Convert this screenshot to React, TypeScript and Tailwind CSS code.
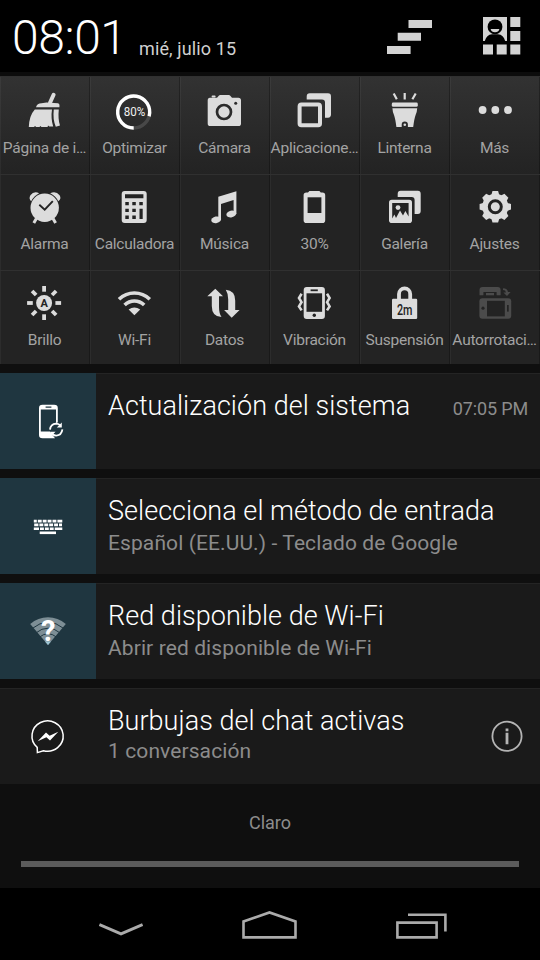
import React from 'react';

interface Tile {
  label: string;
  icon: React.ReactNode;
}

interface NotificationItem {
  title: string;
  text?: string;
  time?: string;
  icon: React.ReactNode;
  highlighted?: boolean;
  info?: boolean;
  /** Vertical gap between title and text */
  textClass?: string;
}

const LIGHT = '#dcdcdc';
const DARK = '#232323';

const TileIcon: React.FC<{ children: React.ReactNode }> = ({ children }) => (
  <svg width="36" height="36" viewBox="0 0 36 36" fill={LIGHT} className="block shrink-0 overflow-visible">
    {children}
  </svg>
);

const BroomIcon = () => (
  <TileIcon>
    <path d="M26.6 1.8 23 9.8" stroke={LIGHT} strokeWidth="4" strokeLinecap="round" />
    <path d="M9 14.2Q10 10.4 14.5 10.2L19.5 9.4 31 10.2Q32.6 10.4 32.5 12.4L32.4 14.2Z" />
    <path d="M7.8 16.4H25Q23.6 25 26.2 33.6L22.4 33.6 21 32.5 20.6 34H14.5L13.4 33 12.5 34H9.2L8 33 7 34H1.8Q2.2 22.5 7.8 16.4Z" />
    <path d="M26.8 16.4H31.8Q30.8 26 33 32.6L28.8 33.8Q25.6 26 26.8 16.4Z" />
  </TileIcon>
);

const OptimizeIcon = () => (
  <TileIcon>
    <circle cx="16.7" cy="19" r="16" fill="none" stroke="#484848" strokeWidth="3.4" />
    <path d="M16.7 35A16 16 0 1 1 32.1 23.2" fill="none" stroke="#fff" strokeWidth="3.4" />
    <text x="17.6" y="23.2" textAnchor="middle" textLength="21.5" lengthAdjust="spacingAndGlyphs" fill="#f0f0f0" className="font-[Roboto] text-[12px]">80%</text>
  </TileIcon>
);

const CameraIcon = () => (
  <TileIcon>
    <path d="M3 4.7H10L12 2.4Q12.4 2 13 2H22Q22.6 2 23 2.4L25 4.7H31.4Q34 4.7 34 7.4V30.4Q34 33 31.4 33H3.4Q.7 33 .7 30.4V7.4Q.7 4.7 3 4.7Z" />
    <rect x="4.6" y="2.6" width="4" height="2" rx=".8" />
    <circle cx="17" cy="19" r="7" fill="none" stroke="#2b2b2b" strokeWidth="2.7" />
    <circle cx="28.7" cy="10.3" r="1.5" fill="#2b2b2b" />
  </TileIcon>
);

const AppsIcon = () => (
  <TileIcon>
    <rect x="2.6" y="11.6" width="20.4" height="20.6" rx="1.8" fill="none" stroke={LIGHT} strokeWidth="4" />
    <path d="M9.7 6.6V3.4Q9.7.3 12.8.3H31Q34 .3 34 3.4V21.6Q34 24.7 31 24.7H28V9.6Q28 6.6 25 6.6Z" />
  </TileIcon>
);

const TorchIcon = () => (
  <TileIcon>
    <path d="M6.7.5 9.8 6.2M17.7 0V6.5M28.7.5 25.4 6.2" stroke={LIGHT} strokeWidth="2.2" />
    <rect x="4.8" y="9.6" width="26" height="4.2" rx="1.4" />
    <path d="M5.4 15.2H30.2Q30 19 28.6 22 27.4 25 26.2 34H20.9V31.6A3.1 3.1 0 0 0 14.7 31.6V34H9.4Q8.2 25 7 22 5.6 19 5.4 15.2Z" />
    <circle cx="17.8" cy="31.8" r="1.3" />
  </TileIcon>
);

const MoreIcon = () => (
  <TileIcon>
    <circle cx="5.6" cy="17" r="3.9" />
    <circle cx="18.3" cy="17" r="3.9" />
    <circle cx="31" cy="17" r="3.9" />
  </TileIcon>
);

const AlarmIcon = () => (
  <TileIcon>
    <circle cx="17.7" cy="18.7" r="14.2" />
    <path d="M4.2 12.2Q1.4 9.8 3.4 6.2 6.8 1.8 12.2 4.2 7 6.6 4.2 12.2ZM31.2 12.2Q34.8 9.8 32.6 6.2 29 1.8 23.2 4.2 28.6 6.6 31.2 12.2Z" />
    <path d="M9.4 29.5 6.8 34M26 29.5 28.6 34" stroke={LIGHT} strokeWidth="3" />
    <path d="M12.3 15.8 17.7 20.6 25.8 12.2" fill="none" stroke={DARK} strokeWidth="1.9" />
  </TileIcon>
);

const CalculatorIcon = () => (
  <TileIcon>
    <rect x="4.7" y="2" width="25" height="32" rx="3" />
    <path
      fill={DARK}
      d="M8 5.2h18.4v4H8zM8.3 13h3.5v3.3H8.3zM15.3 13h3.5v3.3h-3.5zM22.3 13h3.5v3.3h-3.5zM8.3 19.8h3.5v3.3H8.3zM15.3 19.8h3.5v3.3h-3.5zM8.3 26.6h3.5v3.3H8.3zM15.3 26.6h3.5v3.3h-3.5zM22.5 19.8h3.2v10.1h-3.2z"
    />
  </TileIcon>
);

const MusicIcon = () => (
  <TileIcon>
    <path d="M11.3 7.8 29.4 2.2V25H26.6V11L14 15V30.6H11.3Z" />
    <ellipse cx="9.2" cy="30.8" rx="5" ry="3.3" transform="rotate(-12 9.2 30.8)" />
    <ellipse cx="24.3" cy="25" rx="5" ry="3.3" transform="rotate(-12 24.3 25)" />
  </TileIcon>
);

const BatteryIcon = () => (
  <TileIcon>
    <path d="M9.4 3.4H11L12.4 2H22.4L23.8 3.4H25.4Q28.2 3.4 28.2 6.2V31.2Q28.2 34 25.4 34H9.4Q6.6 34 6.6 31.2V6.2Q6.6 3.4 9.4 3.4Z" />
    <rect x="10.6" y="8.3" width="13.8" height="15.7" fill={DARK} />
  </TileIcon>
);

const GalleryIcon = () => (
  <TileIcon>
    <path d="M10.7 8V4.7Q10.7 1.8 13.6 1.8H30.8Q33.7 1.8 33.7 4.7V22Q33.7 25 30.8 25H27.6V11Q27.6 8 24.7 8Z" />
    <rect x="2" y="10.7" width="23" height="23.3" rx="2.8" />
    <path d="M5.2 14H21.6V27.6L18.4 22 16 26.4 13 21.5 9 29 7.4 25.6 5.2 29.6Z" fill={DARK} />
    <circle cx="11" cy="18.6" r="2.4" />
  </TileIcon>
);

const ANGLES = [0, 45, 90, 135, 180, 225, 270, 315];

const SettingsIcon = () => (
  <TileIcon>
    {ANGLES.map(angle => (
      <path key={angle} d="M14.2 6.4 15.5 2.1H21.1L22.4 6.4Z" transform={`rotate(${angle} 18.3 17.8)`} />
    ))}
    <circle cx="18.3" cy="17.8" r="13" />
    <circle cx="18.3" cy="17.8" r="6" fill="none" stroke={DARK} strokeWidth="3" />
  </TileIcon>
);

const BrightnessIcon = () => (
  <TileIcon>
    {ANGLES.map(angle => (
      <rect key={angle} x="15.2" y="1" width="3.8" height="5.7" transform={`rotate(${angle} 17.1 18)`} />
    ))}
    <circle cx="17.1" cy="18" r="8" />
    <text x="17.1" y="22" textAnchor="middle" fill={DARK} className="font-[Roboto] text-[11px] font-bold">A</text>
  </TileIcon>
);

const WifiIcon = () => (
  <TileIcon>
    <g fill="none" stroke={LIGHT} strokeWidth="3.6">
      <path d="M2 14.2Q8.6 8 17.4 8T32.8 14.2" />
      <path d="M7.6 20Q11.8 16 17.4 16T27.2 20" />
    </g>
    <path d="M11.6 24.6Q17.4 20.6 23.2 24.6L17.4 30.2Z" />
  </TileIcon>
);

const DataIcon = () => (
  <TileIcon>
    <path d="M8.3 3.7 16 11.3H12V22Q12 28.5 14.5 32 4.8 31.8 4.8 21V11.3H.3Z" />
    <path d="M24.7 32.8 17.1 25H21.2V14.6Q21.2 8.4 18.8 4.7 28.2 5.4 28.2 15.6V25H32.6Z" />
  </TileIcon>
);

const VibrateIcon = () => (
  <TileIcon>
    <rect x="6.7" y="2" width="21.2" height="32" rx="3" />
    <rect x="9.5" y="8.3" width="15.6" height="18.5" fill={DARK} />
    <rect x="13.6" y="4.4" width="7.2" height="1.8" fill={DARK} />
    <circle cx="17.3" cy="30.3" r="1.7" fill={DARK} />
    <path
      d="M4.6 8.8 2 13 4.5 17.2 2 21.4 4.6 25.4M30 8.8 32.6 13 30.1 17.2 32.6 21.4 30 25.4"
      fill="none"
      stroke={LIGHT}
      strokeWidth="2.6"
    />
  </TileIcon>
);

const LockIcon = () => (
  <TileIcon>
    <rect x="5" y="13.8" width="25.2" height="20.2" rx="1.2" />
    <path d="M12 14.5V9A5.6 5.6 0 0 1 23.2 9V14.5" fill="none" stroke={LIGHT} strokeWidth="3.8" />
    <text x="17.7" y="29.6" textAnchor="middle" textLength="15.5" lengthAdjust="spacingAndGlyphs" fill={DARK} className="font-[Roboto] text-[14.5px] font-medium">2m</text>
  </TileIcon>
);

const RotateIcon = () => (
  <TileIcon>
    <g fill="#4b4b4b">
      <path d="M2.5 10.3V5Q2.5 2 5.5 2H20.6Q23.6 2 23.6 5V10.3H19.6V7H6.4V10.3Z" />
      <rect x="9" y="8" width="8" height="2.3" />
      <rect x="2.4" y="13.3" width="31.8" height="20.4" rx="3" />
      <path d="M26 3.2Q30.5 3.2 31 7H33.6L30 11 26.4 7.4H29Q28.6 5 26 5Z" />
    </g>
    <rect x="10" y="15.8" width="17.8" height="15.6" fill={DARK} />
    <circle cx="6" cy="23.2" r="1.6" fill={DARK} />
    <rect x="30" y="20" width="1.7" height="6.6" fill={DARK} />
  </TileIcon>
);

const ROWS: Tile[][] = [
  [
    { label: 'Página de i…', icon: <BroomIcon /> },
    { label: 'Optimizar', icon: <OptimizeIcon /> },
    { label: 'Cámara', icon: <CameraIcon /> },
    { label: 'Aplicacione…', icon: <AppsIcon /> },
    { label: 'Linterna', icon: <TorchIcon /> },
    { label: 'Más', icon: <MoreIcon /> }
  ],
  [
    { label: 'Alarma', icon: <AlarmIcon /> },
    { label: 'Calculadora', icon: <CalculatorIcon /> },
    { label: 'Música', icon: <MusicIcon /> },
    { label: '30%', icon: <BatteryIcon /> },
    { label: 'Galería', icon: <GalleryIcon /> },
    { label: 'Ajustes', icon: <SettingsIcon /> }
  ],
  [
    { label: 'Brillo', icon: <BrightnessIcon /> },
    { label: 'Wi-Fi', icon: <WifiIcon /> },
    { label: 'Datos', icon: <DataIcon /> },
    { label: 'Vibración', icon: <VibrateIcon /> },
    { label: 'Suspensión', icon: <LockIcon /> },
    { label: 'Autorrotaci…', icon: <RotateIcon /> }
  ]
];

const ROW_CLASSES = [
  'h-[98px] bg-linear-to-b from-[#323232] to-[#232323]',
  'h-[96px] bg-[#232323]',
  'h-[94px] bg-[#232323]'
];

const TILE_CLASSES = ['pt-[16px]', 'pt-[14px]', 'pt-[14px]'];

const NoteIcon: React.FC<{ children: React.ReactNode }> = ({ children }) => (
  <svg width="96" height="96" viewBox="0 0 96 96" fill="#fff" className="block">
    {children}
  </svg>
);

const UpdateIcon = () => (
  <NoteIcon>
    <path
      fillRule="evenodd"
      d="M42.5 31.7H54.2Q57.8 31.7 57.8 35V49.5L56 50V36.5H40.8V58.6H50L52.5 62 55 65.3H42.5Q39 65.3 39 62V35Q39 31.7 42.5 31.7ZM45.6 33.4V34.8H51.4V33.4Z"
    />
    <path d="M50 56.6Q50.6 51 56 50.6 58.4 50.6 60 52.2M62.4 56.4Q61.6 62.2 56.4 62.6 54 62.6 52.4 61" fill="none" stroke="#fff" strokeWidth="1.8" />
    <path d="M61.8 49.4V54.4H56.8ZM50.4 63.8V58.8H55.6Z" />
  </NoteIcon>
);

const KeyboardIcon = () => (
  <NoteIcon>
    <g fill="none" stroke="#fff" strokeWidth="2.6">
      <path d="M33.8 43.1H62.3" strokeDasharray="3 1 3.9 1 3.9 1 3.9 1 3.9 1 5 0" />
      <path d="M34.2 46.9H62" strokeDasharray="4.2 1 3.9 1 3.9 1 3.9 1 3.9 1 5 0" />
      <path d="M33.8 50.8H62.3" strokeDasharray="5.2 1 3.9 1 3.9 1 3.9 1 7 0" />
      <path d="M39.7 54.8H56" />
    </g>
  </NoteIcon>
);

const OpenWifiIcon = () => (
  <NoteIcon>
    <path d="M30.2 41Q38 34.3 48 34.3T65.8 41L48 62Z" fill="#7d8e95" />
    <g fill="none" stroke="#1f3640" strokeWidth="1">
      <path d="M33 45Q39.5 39.4 48 39.4T63 45" />
      <path d="M36.5 49.6Q41.5 45.2 48 45.2T59.5 49.6" />
      <path d="M40 53.8Q43.5 50.8 48 50.8T56 53.8" />
    </g>
    <path d="M45 58.4H51L48 62Z" fill="#9bc4d4" />
    <text x="48.3" y="57.8" textAnchor="middle" className="font-[Roboto] text-[29px] font-bold">?</text>
  </NoteIcon>
);

const MessengerIcon = () => (
  <NoteIcon>
    <path
      d="M37.2 59.4A15.6 15.2 0 1 1 43.4 62.7L37.4 64.6Z"
      fill="none"
      stroke="#fff"
      strokeWidth="1.5"
    />
    <path d="M37.7 53.2 46 44.4 49.6 47.8 58.3 43.8 50 52.6 46.4 49.2Z" />
  </NoteIcon>
);

const NOTIFICATIONS: NotificationItem[] = [
  {
    title: 'Actualización del sistema',
    time: '07:05 PM',
    icon: <UpdateIcon />,
    highlighted: true
  },
  {
    title: 'Selecciona el método de entrada',
    text: 'Español (EE.UU.) - Teclado de Google',
    icon: <KeyboardIcon />,
    highlighted: true
  },
  {
    title: 'Red disponible de Wi-Fi',
    text: 'Abrir red disponible de Wi-Fi',
    icon: <OpenWifiIcon />,
    highlighted: true
  },
  {
    title: 'Burbujas del chat activas',
    text: '1 conversación',
    icon: <MessengerIcon />,
    info: true,
    textClass: 'mt-[2px]'
  }
];

const StatusHeader = () => (
  <header className="flex h-[72px] shrink-0 bg-black pl-[12px] pr-[19px]">
    <span className="w-[127px] whitespace-nowrap pt-[10px] text-[48px] font-light leading-[56px] tracking-[-0.4px] text-white">08:01</span>
    <span className="whitespace-nowrap pt-[38px] text-[18px] leading-[22px] tracking-[0.12px] text-[#d0d0d0]">mié, julio 15</span>
    <div className="ml-auto flex gap-[51px] pt-[17px]">
      <svg width="45" height="38" viewBox="0 0 45 38" fill="#d3d3d3">
        <path d="M21.5 3H45v8H21.5zM10.7 15.8H34v8H10.7zM0 29H23.6v8H0z" />
      </svg>
      <svg width="38" height="38" viewBox="0 0 38 38" fill="#d3d3d3">
        <path d="M0 0h24v24H0zM27.3 0H37.3v10H27.3zM27.3 14H37.3v10H27.3zM0 27.6h10v10H0zM13.7 27.6h10v10h-10zM27.3 27.6h10v10h-10z" />
        <path d="M1.8 24Q3.5 17.6 9 17.2H15Q20.5 17.6 22.2 24Z" fill="#000" />
        <circle cx="12" cy="9.8" r="7.4" fill="#000" />
        <path d="M7.6 12H16.4Q15.6 15.2 12 15.2T7.6 12Z" />
      </svg>
    </div>
  </header>
);

const TileGrid = () => (
  <section className="flex shrink-0 flex-col">
    {ROWS.map((row, index) => (
      <div key={index} className={`grid grid-cols-6 border-t border-[#303030] ${ROW_CLASSES[index]}`}>
        {row.map(tile => (
          <div
            key={tile.label}
            className={`flex min-w-0 flex-col items-center border-l border-r border-l-[#ffffff0b] border-r-[#00000048] ${TILE_CLASSES[index]}`}
          >
            {tile.icon}
            <span className="mt-[9px] whitespace-nowrap pr-px text-[15.5px] leading-[20px] tracking-[-0.25px] text-[#a3a3a3]">{tile.label}</span>
          </div>
        ))}
      </div>
    ))}
  </section>
);

const NotificationCard: React.FC<{ item: NotificationItem }> = ({ item }) => (
  <article className="flex h-[96px] border-t border-[#242424] bg-[#1a1a1a]">
    <div className={`-mt-px h-[96px] w-[96px] shrink-0 ${item.highlighted ? 'bg-[#1f3640]' : ''}`}>{item.icon}</div>
    <div className="flex min-w-0 flex-1 flex-col pl-[12px] pt-[16px]">
      <h2 className="whitespace-nowrap text-[27px] font-light leading-[32px] tracking-[0.04px] text-white">{item.title}</h2>
      {item.text && (
        <p className={`whitespace-nowrap text-[21px] leading-[24px] tracking-[0.1px] text-[#8c8c8c] ${item.textClass ?? 'mt-[4px]'}`}>{item.text}</p>
      )}
    </div>
    {item.time && (
      <span className="pr-[12px] pt-[24px] text-[18px] leading-[22px] tracking-[-0.15px] text-[#8c8c8c]">{item.time}</span>
    )}
    {item.info && (
      <svg width="32" height="32" viewBox="0 0 32 32" className="mr-[17px] mt-[31px]" fill="none" stroke="#b4b4b4">
        <circle cx="16" cy="16.3" r="14.6" strokeWidth="1.8" />
        <path d="M16 12.8V24.2M16 8.6V11.2" strokeWidth="2.8" />
      </svg>
    )}
  </article>
);

const NavigationBar = () => (
  <nav className="flex h-[72px] shrink-0 justify-between bg-black pl-[99px] pr-[93px] pt-[22px]">
    <svg width="44" height="30" viewBox="0 0 44 30" fill="none" stroke="#ababab" strokeWidth="3">
      <path d="M.4 14.6 22 23.8 43.6 14.6" />
    </svg>
    <svg width="55" height="30" viewBox="0 0 55 30" fill="none" stroke="#ababab" strokeWidth="2.6">
      <path d="M1.5 27.4V11.4L27.5 2.4 53.5 11.4V27.4Z" />
    </svg>
    <svg width="51" height="30" viewBox="0 0 51 30" fill="none" stroke="#ababab" strokeWidth="2.6">
      <path d="M1.4 12.6H40.6V27.4H1.4ZM12 4.8H49.4V21.6" />
    </svg>
  </nav>
);

export default function App() {
  return (
    <main className="flex h-[960px] w-[540px] flex-col overflow-hidden bg-[#0f0f0f] font-[Roboto,sans-serif]">
      <StatusHeader />
      <div className="h-[4px] shrink-0 bg-[#0c0c0c]" />
      <TileGrid />
      <section className="mt-[9px] flex shrink-0 flex-col gap-[9px]">
        {NOTIFICATIONS.map(item => (
          <NotificationCard key={item.title} item={item} />
        ))}
      </section>
      <footer className="flex flex-1 flex-col pt-[28px]">
        <span className="text-center text-[18px] leading-[22px] text-[#8c8c8c]">Claro</span>
        <div className="mx-[21px] mt-[27px] h-[6px] bg-[#5b5b5b]" />
      </footer>
      <NavigationBar />
    </main>
  );
}
